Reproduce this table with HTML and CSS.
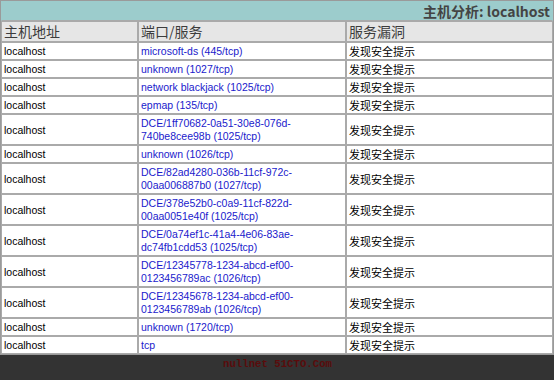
FILE: index.html
```html
<!DOCTYPE html>
<html lang="zh">
<head>
<meta charset="utf-8">
<link rel="stylesheet" href="styles.css">
</head>
<body>
<div class="page">
<table class="report">
  <colgroup><col class="c1"><col class="c2"><col class="c3"></colgroup>
  <tr class="title-row"><td colspan="3" class="title">主机分析: localhost</td></tr>
  <tr class="head-row"><th>主机地址</th><th>端口/服务</th><th>服务漏洞</th></tr>
  <tr><td>localhost</td><td><a>microsoft-ds (445/tcp)</a></td><td>发现安全提示</td></tr>
  <tr><td>localhost</td><td><a>unknown (1027/tcp)</a></td><td>发现安全提示</td></tr>
  <tr><td>localhost</td><td><a>network blackjack (1025/tcp)</a></td><td>发现安全提示</td></tr>
  <tr><td>localhost</td><td><a>epmap (135/tcp)</a></td><td>发现安全提示</td></tr>
  <tr><td>localhost</td><td><a>DCE/1ff70682-0a51-30e8-076d-<br>740be8cee98b (1025/tcp)</a></td><td>发现安全提示</td></tr>
  <tr><td>localhost</td><td><a>unknown (1026/tcp)</a></td><td>发现安全提示</td></tr>
  <tr><td>localhost</td><td><a>DCE/82ad4280-036b-11cf-972c-<br>00aa006887b0 (1027/tcp)</a></td><td>发现安全提示</td></tr>
  <tr><td>localhost</td><td><a>DCE/378e52b0-c0a9-11cf-822d-<br>00aa0051e40f (1025/tcp)</a></td><td>发现安全提示</td></tr>
  <tr><td>localhost</td><td><a>DCE/0a74ef1c-41a4-4e06-83ae-<br>dc74fb1cdd53 (1025/tcp)</a></td><td>发现安全提示</td></tr>
  <tr><td>localhost</td><td><a>DCE/12345778-1234-abcd-ef00-<br>0123456789ac (1026/tcp)</a></td><td>发现安全提示</td></tr>
  <tr><td>localhost</td><td><a>DCE/12345678-1234-abcd-ef00-<br>0123456789ab (1026/tcp)</a></td><td>发现安全提示</td></tr>
  <tr><td>localhost</td><td><a>unknown (1720/tcp)</a></td><td>发现安全提示</td></tr>
  <tr><td>localhost</td><td><a>tcp</a></td><td>发现安全提示</td></tr>
</table>
<div class="footer"><span class="mark">nullnet 51CTO.Com</span></div>
</div>
</body>
</html>
```
FILE: styles.css
```css
html, body {
  margin: 0;
  padding: 0;
  background: #333333;
}
.page {
  width: 554px;
  height: 380px;
  overflow: hidden;
  background: #333333;
}
.report {
  width: 554px;
  border-collapse: separate;
  border-spacing: 0;
  background: #ffffff;
  border: 1px solid #9a9a9a;
  font-family: "Liberation Sans", Arial, "Noto Sans CJK SC", sans-serif;
  font-size: 10.5px;
  color: #000;
}
.c1 { width: 137px; }
.c2 { width: 208px; }
.c3 { width: 207px; }
.report td, .report th {
  border: 1px solid #aaaaaa;
  padding: 2px 1px 1px 2px;
  line-height: 13px;
  text-align: left;
  vertical-align: middle;
  white-space: nowrap;
}
.report td:nth-child(3) {
  font-family: "Noto Sans CJK SC", sans-serif;
  font-size: 11px;
}
.report a {
  color: #1a1acc;
  text-decoration: none;
}
.title-row .title {
  background: #9ccccc;
  height: 15px;
  text-align: right;
  padding: 2px 2px 1px 2px;
  font-family: "Noto Sans CJK SC", sans-serif;
  font-weight: bold;
  font-size: 14px;
  line-height: 15px;
  color: #444444;
  border-color: #9ccccc;
  border-bottom: 1px solid #aaaaaa;
}
.head-row th {
  background: #e6e6e6;
  font-family: "Noto Sans CJK SC", sans-serif;
  font-size: 14px;
  font-weight: normal;
  color: #3c3c3c;
  line-height: 17px;
  padding: 1px 1px 1px 2px;
}
.footer {
  height: 27px;
  display: flex;
  justify-content: center;
  align-items: flex-start;
  padding-top: 3px;
  padding-left: 1px;
}
.mark {
  font-family: "Liberation Mono", "Courier New", monospace;
  font-weight: bold;
  font-size: 10.7px;
  color: #5a0c0c;
}
```
